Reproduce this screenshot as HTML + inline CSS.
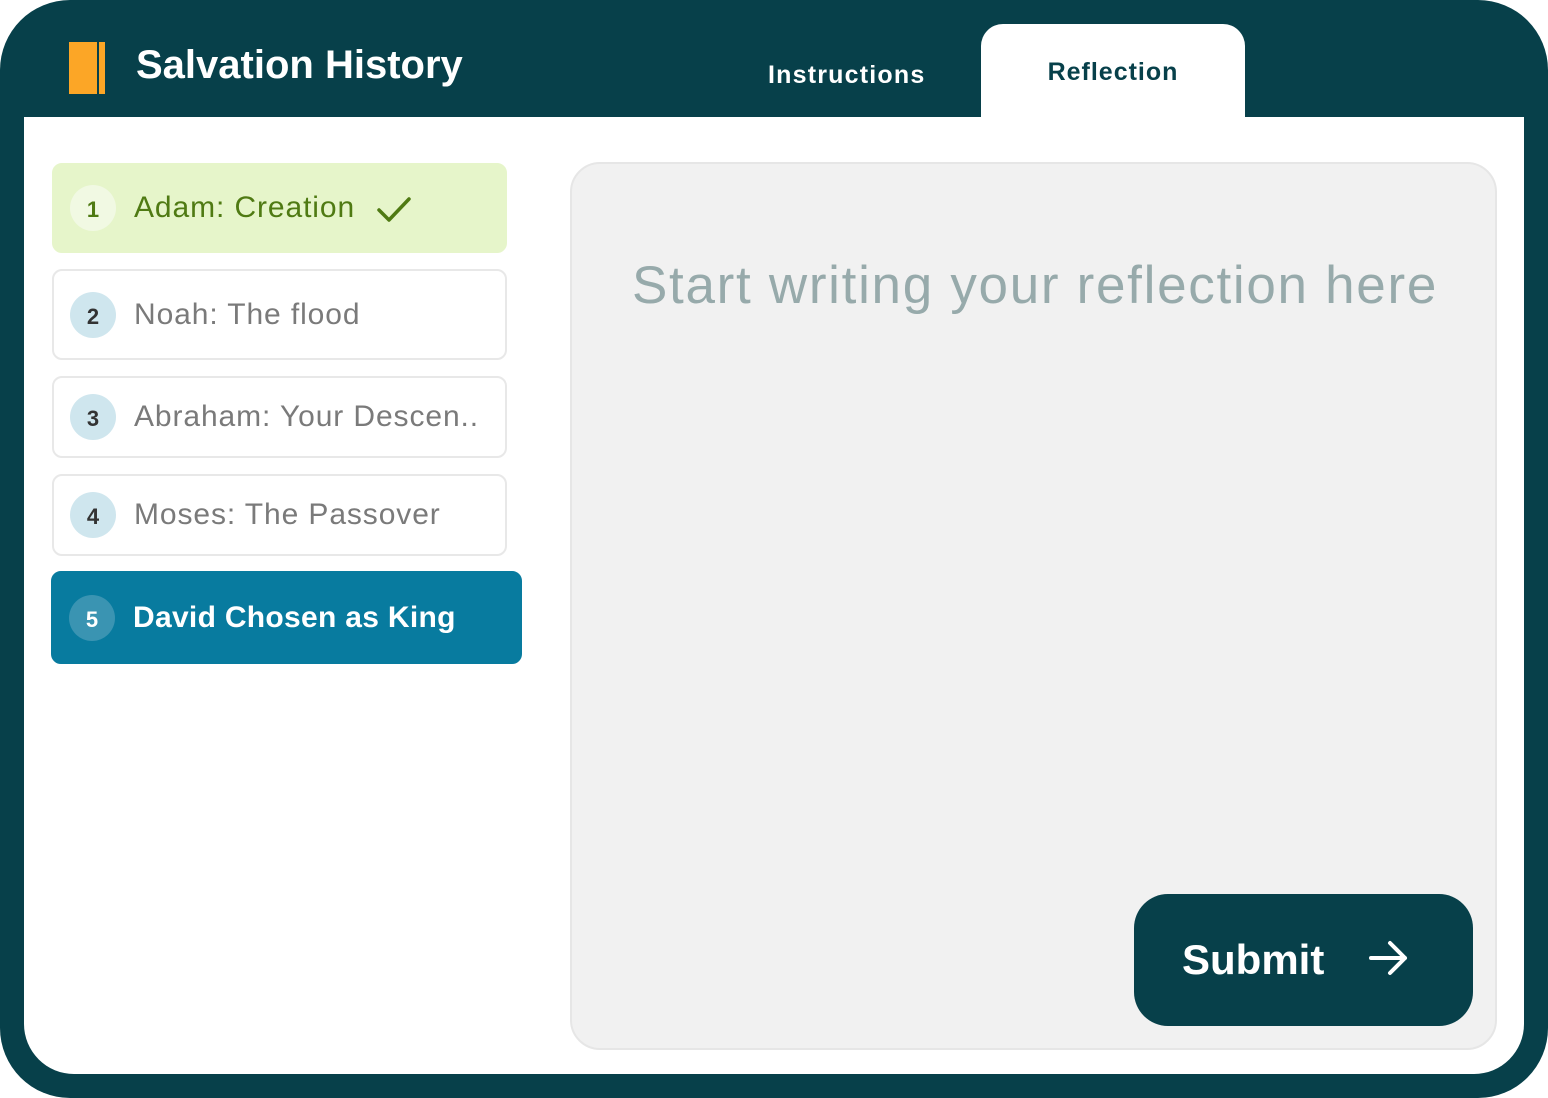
<!DOCTYPE html>
<html><head><meta charset="utf-8"><style>
*{margin:0;padding:0;box-sizing:border-box}
body{width:1548px;height:1098px;background:#fff;font-family:"Liberation Sans",sans-serif;position:relative;overflow:hidden}
.frame{position:absolute;left:0;top:0;width:1548px;height:1098px;background:#07404a;border-radius:70px}
.inner{position:absolute;left:24px;top:117px;width:1500px;height:957px;background:#fff;border-radius:0 0 50px 50px}
.title{position:absolute;left:136px;top:43px;color:#fff;font-size:40px;font-weight:bold;letter-spacing:0}
.tab1{position:absolute;left:768px;top:61px;color:#fff;font-size:25px;font-weight:bold;letter-spacing:1.2px}
.tab2{position:absolute;left:981px;top:24px;width:264px;height:94px;background:#fff;border-radius:22px 22px 0 0;color:#07404a;font-size:25px;font-weight:bold;text-align:center;padding-top:34px;letter-spacing:1px}
.item{position:absolute;left:52px;width:455px;border:2px solid #e8e8e8;border-radius:10px;background:#fff;font-size:30px;color:#7a7a7a;letter-spacing:0.9px}
.item .c{position:absolute;left:16px;top:50%;margin-top:-23px;width:46px;height:46px;border-radius:50%;background:#cfe6ee;color:#333;font-size:22px;font-weight:bold;text-align:center;line-height:50px;letter-spacing:0}
.item .t{position:absolute;left:80px;top:50%;transform:translateY(-50%);white-space:nowrap}
.box{position:absolute;left:570px;top:162px;width:927px;height:888px;background:#f1f1f1;border:2px solid #e6e6e6;border-radius:30px}
.ph{position:absolute;left:60px;top:91px;font-size:53px;color:#97aaab;letter-spacing:1.7px;white-space:nowrap}
.btn{position:absolute;left:1134px;top:894px;width:339px;height:132px;background:#07404a;border-radius:34px;color:#fff;font-size:42px;font-weight:bold}
</style></head><body>
<div class="frame"></div>
<div class="inner"></div>
<svg style="position:absolute;left:68px;top:41px" width="40" height="54"><rect x="1" y="1" width="28" height="52" fill="#fca626"/><rect x="31" y="1" width="6" height="52" fill="#fca626"/><rect x="29" y="1" width="2" height="52" fill="#07404a"/></svg>
<div class="title">Salvation History</div>
<div class="tab1">Instructions</div>
<div class="tab2">Reflection</div>

<div class="item" style="top:163px;height:90px;background:#e6f5ca;border-color:#e6f5ca;color:#4f7a13"><div class="c" style="background:#f1f9e3;color:#4f7a13">1</div><div class="t">Adam: Creation</div>
<svg style="position:absolute;left:322px;top:30px" width="36" height="30"><path d="M3 15 L13 25 L33 4" stroke="#4f7a13" stroke-width="3.5" fill="none" stroke-linecap="round" stroke-linejoin="round"/></svg></div>
<div class="item" style="top:269px;height:91px"><div class="c">2</div><div class="t">Noah: The flood</div></div>
<div class="item" style="top:376px;height:82px"><div class="c">3</div><div class="t">Abraham: Your Descen..</div></div>
<div class="item" style="top:474px;height:82px"><div class="c">4</div><div class="t">Moses: The Passover</div></div>
<div class="item" style="top:571px;left:51px;width:471px;height:93px;background:#087b9f;border-color:#087b9f;color:#fff;font-weight:bold;letter-spacing:0.3px"><div class="c" style="background:#3a94b2;color:#fff">5</div><div class="t">David Chosen as King</div></div>

<div class="box"><div class="ph">Start writing your reflection here</div></div>
<div class="btn"><span style="position:absolute;left:48px;top:42px">Submit</span>
<svg style="position:absolute;left:234px;top:46px" width="42" height="36"><path d="M3 18 H37 M22 3 L37 18 L22 33" stroke="#fff" stroke-width="4" fill="none" stroke-linecap="round" stroke-linejoin="round"/></svg></div>
</body></html>
